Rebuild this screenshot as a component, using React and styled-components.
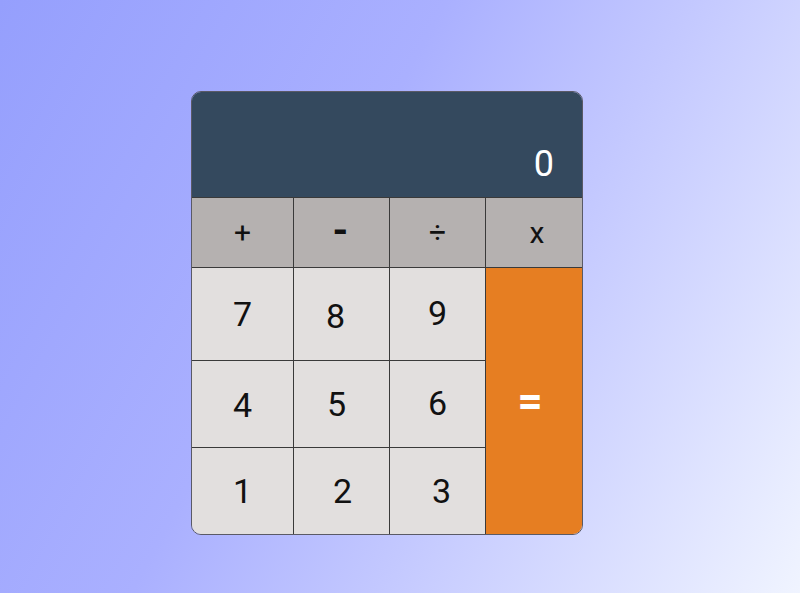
import styled, { createGlobalStyle } from 'styled-components';

// global reset + page background
const GlobalStyle = createGlobalStyle`
  * {
    box-sizing: border-box;
  }
  html, body {
    margin: 0;
    padding: 0;
  }
  body {
    font-family: Roboto, "Noto Sans", sans-serif;
    background: linear-gradient(118deg, #959ffd 0%, #aab0ff 40%, #c3c8ff 62%, #f0f4ff 100%);
    min-height: 593px;
  }
`;

const StPage = styled.main`
  min-height: 593px;
  padding: 91px 0 0 191px;
`;

const StCalc = styled.div`
  width: 392px;
  display: grid;
  grid-template-columns: 102px 96px 96px 98px;
  grid-template-rows: 105px 70px 93px 87px 87px;
  border-radius: 10px;
  border: 1px solid #5a5a66;
  overflow: hidden;
`;

const StScreen = styled.div`
  grid-column: 1 / 5;
  background: #34495e;
  color: #fff;
  font-size: 36px;
  display: flex;
  align-items: flex-end;
  justify-content: flex-end;
  padding: 0 30px 12px 0;
`;

// $dx / $dy nudge the label off-centre (positive = right / down)
const nudge = (v = 0) => `${Math.max(v, 0)}px`;
const nudgeBack = (v = 0) => `${Math.max(-v, 0)}px`;

const StKey = styled.button`
  font-family: Roboto, "Noto Sans", sans-serif;
  border: none;
  border-right: ${({ $last }) => ($last ? 'none' : '1px solid #3a3a3a')};
  border-top: 1px solid #3a3a3a;
  margin: 0;
  padding-top: ${({ $dy }) => nudge($dy)};
  padding-bottom: ${({ $dy }) => nudgeBack($dy)};
  padding-left: ${({ $dx }) => nudge($dx)};
  padding-right: ${({ $dx }) => nudgeBack($dx)};
  background: ${({ $op }) => ($op ? '#b5b1b0' : '#e2dfde')};
  color: #111;
  font-size: ${({ $op }) => ($op ? '30px' : '34px')};
  display: flex;
  align-items: center;
  justify-content: center;
  cursor: pointer;
`;

// the minus sign is drawn heavier than the other operators
const StMinus = styled.span`
  font-size: 40px;
  font-weight: 700;
  line-height: 1;
`;

const StEqual = styled.button`
  grid-column: 4;
  grid-row: 3 / 6;
  border: none;
  border-top: 1px solid #3a3a3a;
  margin: 0;
  padding: 0 10px 0 0;
  background: #e67e22;
  color: #fff;
  font-family: Roboto, "Noto Sans", sans-serif;
  font-size: 44px;
  font-weight: 700;
  cursor: pointer;
`;

const ops = [
  { label: '+', dx: 0 },
  { label: <StMinus>-</StMinus>, dx: -2, dy: -4 },
  { label: '÷', dx: 0 },
  { label: 'x', dx: 4, last: true },
];

const digits = [
  { label: '7', dx: 0, dy: 0 },
  { label: '8', dx: -12, dy: 4 },
  { label: '9', dx: 0, dy: -2 },
  { label: '4', dx: 0, dy: 2 },
  { label: '5', dx: -10, dy: 0 },
  { label: '6', dx: 0, dy: -3 },
  { label: '1', dx: 0, dy: 0 },
  { label: '2', dx: 2, dy: 0 },
  { label: '3', dx: 8, dy: 0 },
];

const App = () => {
  return (
    <>
      <GlobalStyle />
      <StPage>
        <StCalc>
          <StScreen>0</StScreen>
          {ops.map((el, idx) => (
            <StKey key={idx} $op $dx={el.dx} $dy={el.dy} $last={el.last}>
              {el.label}
            </StKey>
          ))}
          {digits.map((el, idx) => (
            <StKey key={idx} $dx={el.dx} $dy={el.dy}>
              {el.label}
            </StKey>
          ))}
          <StEqual>=</StEqual>
        </StCalc>
      </StPage>
    </>
  );
};

export default App;
